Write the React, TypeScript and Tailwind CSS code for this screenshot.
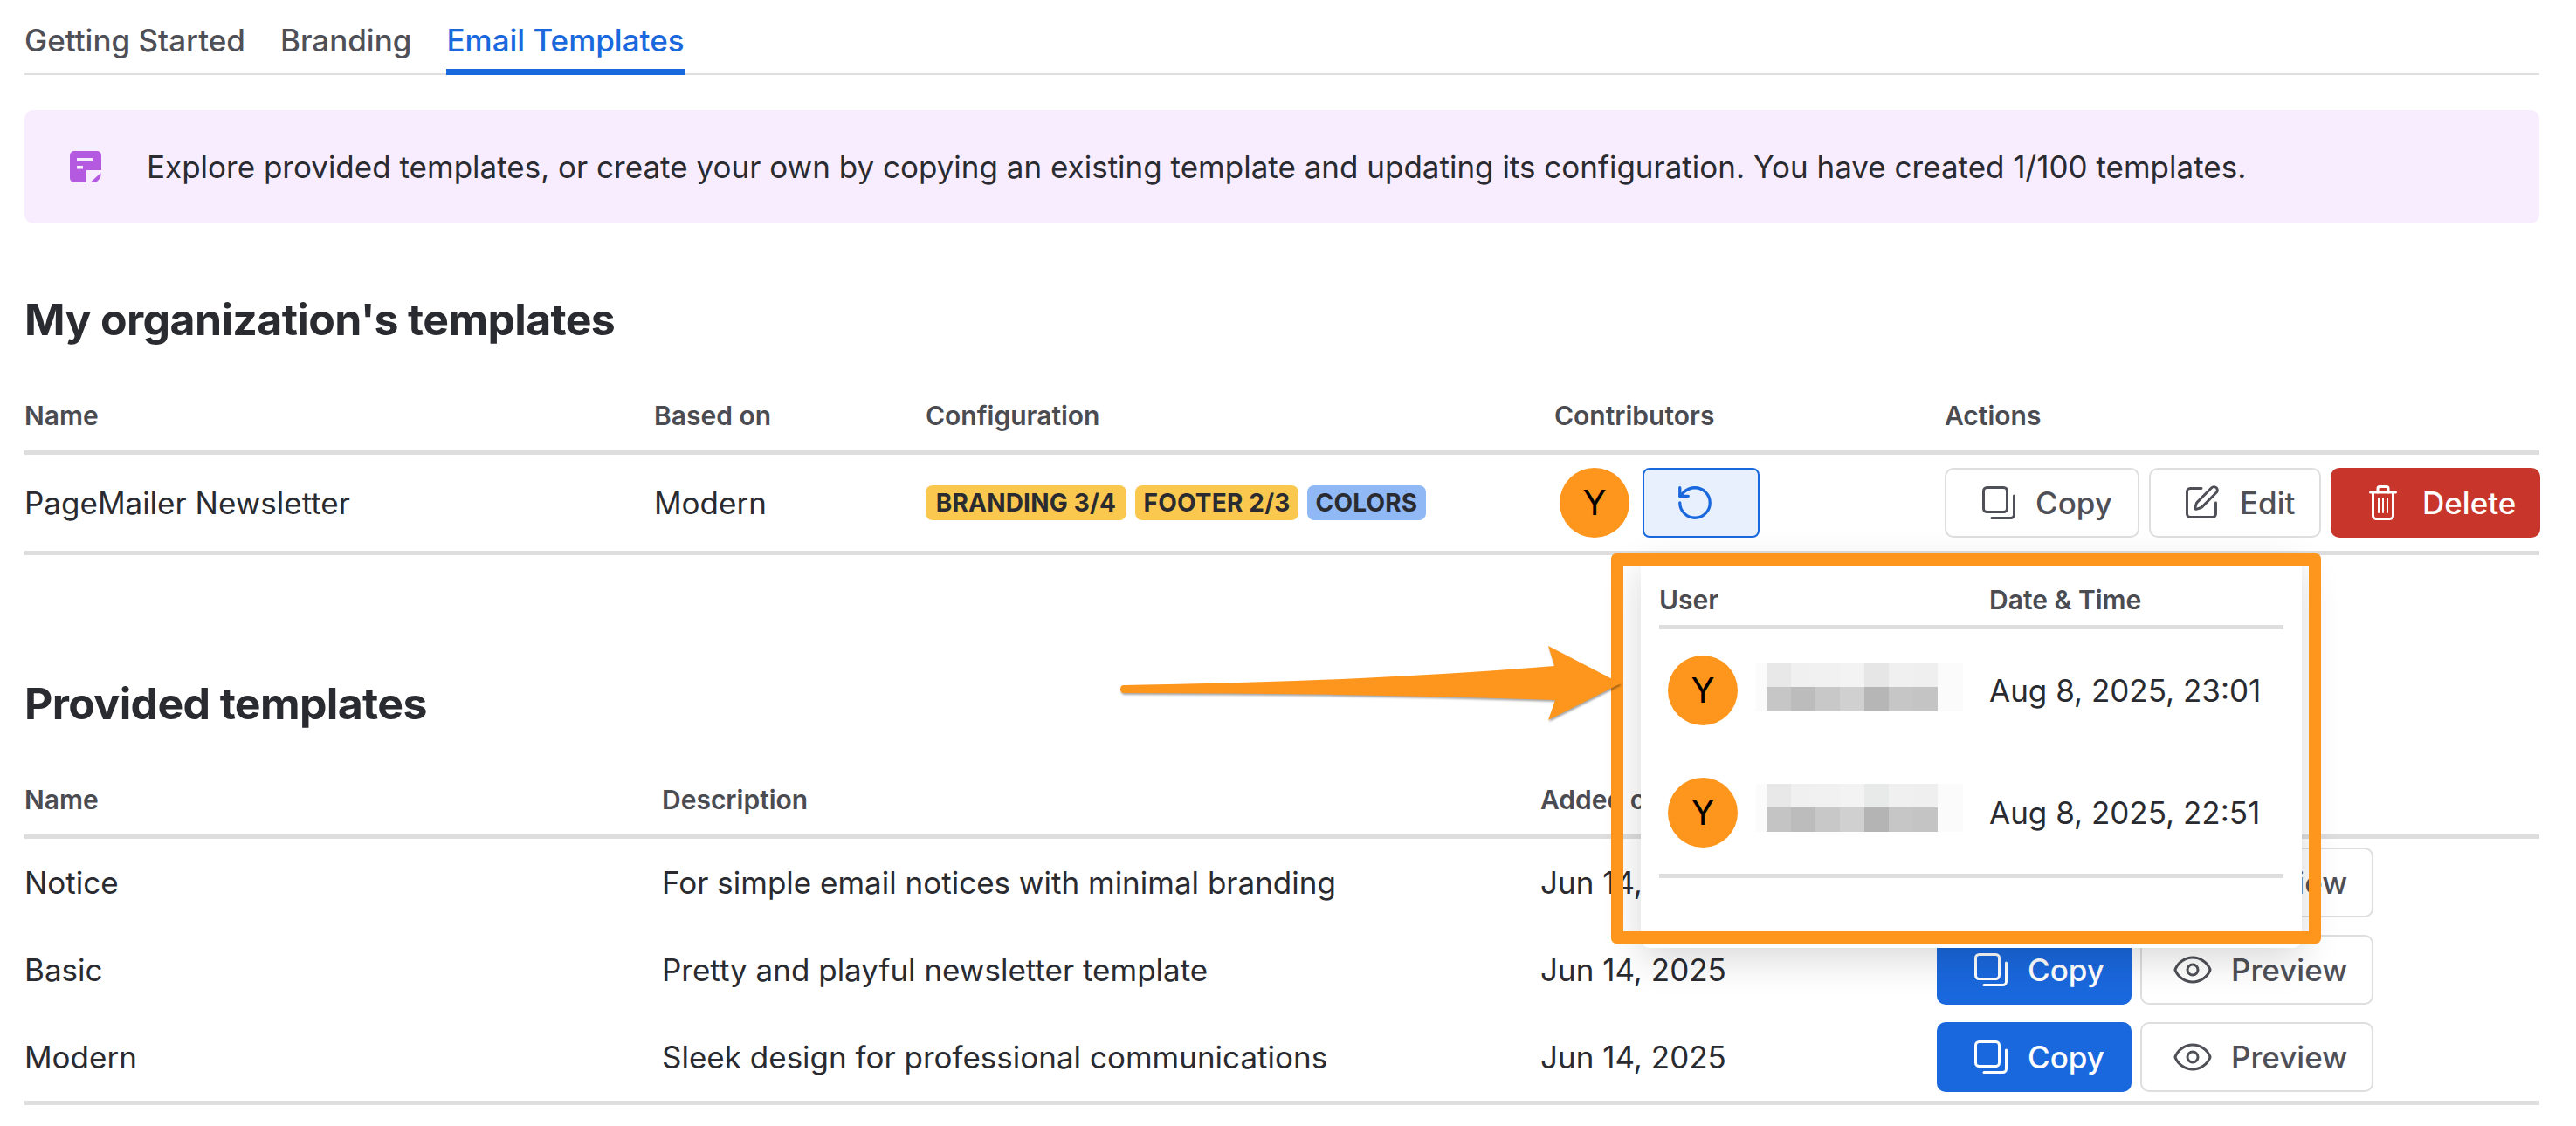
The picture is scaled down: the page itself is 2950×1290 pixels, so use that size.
import React from "react";
import { RotateCcw, SquarePen, Eye } from "lucide-react";

function CopyIcon({ className }: { className: string }) {
  return (
    <svg viewBox="0 0 38 38" fill="none" stroke="currentColor" strokeWidth="3" strokeLinecap="round" className={className}>
      <rect x="1.5" y="1.5" width="27" height="28" rx="4" />
      <path d="M36.5 11V32.5a4 4 0 0 1-4 4H11" />
    </svg>
  );
}

function TrashIcon({ className }: { className: string }) {
  return (
    <svg viewBox="0 0 32 40" fill="none" stroke="currentColor" strokeWidth="3" strokeLinecap="round" strokeLinejoin="round" className={className}>
      <path d="M1.5 8H30.5" />
      <path d="M10 8V3.5a2 2 0 0 1 2-2h8a2 2 0 0 1 2 2V8" />
      <path d="M4.5 8V35a3.5 3.5 0 0 0 3.5 3.5H24a3.5 3.5 0 0 0 3.5-3.5V8" />
      <path d="M11 15V31M16 15V31M21 15V31" strokeWidth="2" />
    </svg>
  );
}

function NoteIcon() {
  return (
    <svg viewBox="0 0 36 36" className="w-[36px] h-[36px] shrink-0">
      <path fill="#b35ae0" d="M5 0H31a5 5 0 0 1 5 5V22H19V36H5a5 5 0 0 1-5-5V5a5 5 0 0 1 5-5Z" />
      <path fill="#b35ae0" d="M24 35.5L35.5 25V28Q35.5 31 33 33L31 35Q30 35.5 29 35.5Z" />
      <rect x="8" y="8" width="18" height="3.5" fill="#f8edfe" />
      <rect x="8" y="17" width="7" height="3.5" fill="#f8edfe" />
    </svg>
  );
}

function Avatar() {
  return (
    <div className="w-[80px] h-[80px] shrink-0 rounded-full bg-[#fe961d] flex items-center justify-center text-[40px] text-black">
      Y
    </div>
  );
}

function Btn({ kind, label, width }: { kind: "copy" | "copyBlue" | "edit" | "delete" | "preview"; label: string; width: string }) {
  const base = "h-[80px] shrink-0 rounded-[10px] flex items-center text-[35px] font-medium ";
  if (kind === "copyBlue") {
    return (
      <div className={base + width + " bg-[#1a68dd] text-white pl-[43px] gap-[23px]"}>
        <CopyIcon className="w-[38px] h-[38px]" />
        {label}
      </div>
    );
  }
  if (kind === "delete") {
    return (
      <div className={base + width + " bg-[#c8362b] text-white pl-[44px] gap-[29px]"}>
        <TrashIcon className="w-[32px] h-[40px]" />
        {label}
      </div>
    );
  }
  if (kind === "edit") {
    return (
      <div className={base + width + " border-2 border-[#dedede] bg-white text-[#4f5057] pl-[36px] gap-[22px]"}>
        <SquarePen className="w-[44px] h-[44px]" strokeWidth={1.6} />
        {label}
      </div>
    );
  }
  if (kind === "preview") {
    return (
      <div className={base + width + " border-2 border-[#dedede] bg-white text-[#4f5057] pl-[34px] gap-[20px]"}>
        <Eye className="w-[48px] h-[48px]" strokeWidth={1.5} />
        {label}
      </div>
    );
  }
  return (
    <div className={base + width + " border-2 border-[#dedede] bg-white text-[#4f5057] pl-[41px] gap-[23px]"}>
      <CopyIcon className="w-[38px] h-[38px]" />
      {label}
    </div>
  );
}

function Badge({ label, color }: { label: string; color: string }) {
  return (
    <span className={"h-[40px] rounded-[8px] flex items-center justify-center text-[28px] tracking-[0.2px] font-bold text-[#2a2b30] " + color}>
      {label}
    </span>
  );
}

const blurRows = [
  {
    top: ["#e8e8e8", "#f0f0f0", "#f1f1f1", "#f3f3f3", "#e6e6e6", "#f0f0f0", "#efefef"],
    bottom: ["#c6c6c6", "#bcbcbc", "#c8c8c8", "#d0d0d0", "#b6b6b6", "#c6c6c6", "#c4c4c4"],
  },
  {
    top: ["#e8e8e8", "#f0f0f0", "#f1f1f1", "#f3f3f3", "#e8eaea", "#f0f0f0", "#efefef"],
    bottom: ["#c4c4c4", "#bcbcbc", "#c8c8c8", "#d0d0d0", "#b4b4b4", "#c6c6c6", "#c4c4c4"],
  },
];

function Blurred({ index }: { index: number }) {
  const data = blurRows[index];
  return (
    <div className={"flex flex-col w-[237px] bg-[#fbfbfb] " + (index === 0 ? "mb-[8px]" : "mb-[12px]")}>
      <div className="flex h-[27px] pl-[12px]">
        {data.top.map((c, i) => (
          <div key={i} className="w-[28px]" style={{ backgroundColor: c }} />
        ))}
      </div>
      <div className="flex h-[28px] pl-[12px]">
        {data.bottom.map((c, i) => (
          <div key={i} className="w-[28px]" style={{ backgroundColor: c }} />
        ))}
      </div>
    </div>
  );
}

const provided = [
  ["Notice", "For simple email notices with minimal branding"],
  ["Basic", "Pretty and playful newsletter template"],
  ["Modern", "Sleek design for professional communications"],
];

const headCell = "text-[30px] leading-[40px] font-semibold text-[#4b4c52]";
const grid1 = "grid grid-cols-[721px_311px_720px_447px_1fr]";
const grid2 = "grid grid-cols-[730px_1006px_454px_1fr]";
const h2Class = "text-[50px] leading-[60px] font-bold tracking-[-0.65px]";

export default function App() {
  return (
    <div className="relative w-[2950px] h-[1290px] overflow-hidden bg-white text-[#2a2b30] pl-[28px] pr-[42px]" style={{ fontFamily: "Inter, sans-serif" }}>
      {/* Tabs */}
      <div className="flex gap-[40px] h-[86px] border-b-2 border-[#dedede] text-[35px] font-medium text-[#4f5057]">
        <div className="h-[86px] pt-[24px] leading-[44px]">Getting Started</div>
        <div className="h-[86px] pt-[24px] leading-[44px]">Branding</div>
        <div className="h-[86px] pt-[24px] leading-[44px] text-[#1a68dd] border-b-[7px] border-[#1a68dd]">Email Templates</div>
      </div>

      {/* Notice */}
      <div className="mt-[40px] h-[130px] rounded-[10px] bg-[#f8edfe] flex items-center pl-[52px] gap-[52px] text-[35px]">
        <NoteIcon />
        <span>Explore provided templates, or create your own by copying an existing template and updating its configuration. You have created 1/100 templates.</span>
      </div>

      {/* My templates */}
      <h2 className={"mt-[80px] " + h2Class}>My organization's templates</h2>
      <div className={grid1 + " h-[125px] items-end pb-[20px] border-b-[5px] border-[#dedede] " + headCell}>
        <div>Name</div>
        <div>Based on</div>
        <div>Configuration</div>
        <div>Contributors</div>
        <div>Actions</div>
      </div>
      <div className={grid1 + " h-[115px] items-center border-b-[5px] border-[#dedede] text-[35px]"}>
        <div>PageMailer Newsletter</div>
        <div>Modern</div>
        <div className="grid grid-cols-[230px_187px_136px] gap-[10px] w-[573px]">
          <Badge label="BRANDING 3/4" color="bg-[#fac84f]" />
          <Badge label="FOOTER 2/3" color="bg-[#fac84f]" />
          <Badge label="COLORS" color="bg-[#8fb8f5]" />
        </div>
        <div className="flex items-center gap-[15px] pl-[6px]">
          <Avatar />
          <div className="w-[134px] h-[80px] rounded-[8px] border-2 border-[#1a68dd] bg-[#e8f0fd] flex items-center pl-[35px] text-[#1a68dd]">
            <RotateCcw className="w-[46px] h-[46px]" strokeWidth={1.7} />
          </div>
        </div>
        <div className="flex gap-[11px]">
          <Btn kind="copy" label="Copy" width="w-[223px]" />
          <Btn kind="edit" label="Edit" width="w-[197px]" />
          <Btn kind="delete" label="Delete" width="w-[240px]" />
        </div>
      </div>

      {/* Provided templates */}
      <h2 className={"mt-[140px] " + h2Class}>Provided templates</h2>
      <div className={grid2 + " h-[125px] items-end pb-[20px] border-b-[5px] border-[#dedede] " + headCell}>
        <div>Name</div>
        <div>Description</div>
        <div>Added on</div>
        <div>Actions</div>
      </div>
      <div className="border-b-[5px] border-[#dedede] text-[35px]">
        {provided.map(([name, desc]) => (
          <div key={name} className={grid2 + " h-[100px] items-center"}>
            <div>{name}</div>
            <div>{desc}</div>
            <div>Jun 14, 2025</div>
            <div className="flex gap-[10px]">
              <Btn kind="copyBlue" label="Copy" width="w-[223px]" />
              <Btn kind="preview" label="Preview" width="w-[267px]" />
            </div>
          </div>
        ))}
      </div>

      {/* Contributors popover */}
      <div className="absolute left-[1879px] top-[640px] w-[757px] h-[446px] rounded-[10px] bg-white px-[21px] shadow-[0_12px_45px_rgba(0,0,0,0.16)]">
        <div className="grid grid-cols-[378px_1fr] h-[81px] items-end pb-[9px] border-b-[5px] border-[#dedede] text-[30px] leading-[40px] font-semibold text-[#4b4c52]">
          <div>User</div>
          <div>Date &amp; Time</div>
        </div>
        <div className="border-b-[5px] border-[#dedede] h-[285px] text-[35px]">
          {["Aug 8, 2025, 23:01", "Aug 8, 2025, 22:51"].map((d, i) => (
            <div key={d} className="grid grid-cols-[378px_1fr] h-[140px] items-center">
              <div className="flex items-center gap-[21px] pl-[10px]">
                <Avatar />
                <Blurred index={i} />
              </div>
              <div>{d}</div>
            </div>
          ))}
        </div>
      </div>

      {/* Annotation rectangle */}
      <div className="absolute left-[1845px] top-[634px] w-[813px] h-[447px] border-[14px] border-[#fe961d] rounded-[6px] pointer-events-none" />

      {/* Annotation arrow */}
      <svg className="absolute left-[1270px] top-[730px] w-[600px] h-[110px] drop-shadow-[1px_2px_1px_rgba(0,0,0,0.35)]" viewBox="1270 730 600 110">
        <path fill="#fe961d" d="M1287 785Q1560 781 1780 763L1773 740L1856 783L1773 825L1781 802Q1540 794 1287 794Q1283 794 1283 789.5Q1283 785 1287 785Z" />
      </svg>
    </div>
  );
}
